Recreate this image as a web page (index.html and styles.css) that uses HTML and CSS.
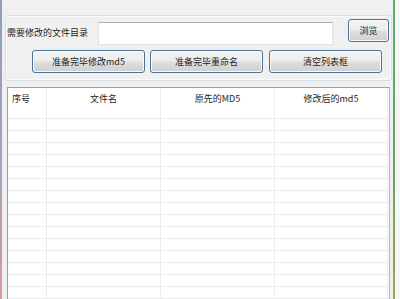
FILE: index.html
```html
<!DOCTYPE html>
<html>
<head>
<meta charset="utf-8">
<link rel="stylesheet" href="styles.css">
</head>
<body>
<div class="frame">
  <div class="edge-left"></div>
  <div class="main">
    <div class="group">
      <div class="row1">
        <span class="label">需要修改的文件目录</span>
        <div class="textbox"></div>
        <button class="btn browse">浏览</button>
      </div>
      <div class="row2">
        <button class="btn wide">准备完毕修改md5</button>
        <button class="btn wide">准备完毕重命名</button>
        <button class="btn wide third">清空列表框</button>
      </div>
    </div>
    <div class="list">
      <div class="lrow head">
        <div class="cell first">序号</div>
        <div class="cell center">文件名</div>
        <div class="cell center">原先的MD5</div>
        <div class="cell center">修改后的md5</div>
        <div class="cell rest"></div>
      </div>
      <div class="lrow item"><div class="cell"></div><div class="cell"></div><div class="cell"></div><div class="cell"></div><div class="cell rest"></div></div>
      <div class="lrow item"><div class="cell"></div><div class="cell"></div><div class="cell"></div><div class="cell"></div><div class="cell rest"></div></div>
      <div class="lrow item"><div class="cell"></div><div class="cell"></div><div class="cell"></div><div class="cell"></div><div class="cell rest"></div></div>
      <div class="lrow item"><div class="cell"></div><div class="cell"></div><div class="cell"></div><div class="cell"></div><div class="cell rest"></div></div>
      <div class="lrow item"><div class="cell"></div><div class="cell"></div><div class="cell"></div><div class="cell"></div><div class="cell rest"></div></div>
      <div class="lrow item"><div class="cell"></div><div class="cell"></div><div class="cell"></div><div class="cell"></div><div class="cell rest"></div></div>
      <div class="lrow item"><div class="cell"></div><div class="cell"></div><div class="cell"></div><div class="cell"></div><div class="cell rest"></div></div>
      <div class="lrow item"><div class="cell"></div><div class="cell"></div><div class="cell"></div><div class="cell"></div><div class="cell rest"></div></div>
      <div class="lrow item"><div class="cell"></div><div class="cell"></div><div class="cell"></div><div class="cell"></div><div class="cell rest"></div></div>
      <div class="lrow item"><div class="cell"></div><div class="cell"></div><div class="cell"></div><div class="cell"></div><div class="cell rest"></div></div>
      <div class="lrow item"><div class="cell"></div><div class="cell"></div><div class="cell"></div><div class="cell"></div><div class="cell rest"></div></div>
      <div class="lrow item"><div class="cell"></div><div class="cell"></div><div class="cell"></div><div class="cell"></div><div class="cell rest"></div></div>
      <div class="lrow item"><div class="cell"></div><div class="cell"></div><div class="cell"></div><div class="cell"></div><div class="cell rest"></div></div>
      <div class="lrow item"><div class="cell"></div><div class="cell"></div><div class="cell"></div><div class="cell"></div><div class="cell rest"></div></div>
      <div class="lrow item"><div class="cell"></div><div class="cell"></div><div class="cell"></div><div class="cell"></div><div class="cell rest"></div></div>
      <div class="lrow item"><div class="cell"></div><div class="cell"></div><div class="cell"></div><div class="cell"></div><div class="cell rest"></div></div>
    </div>
  </div>
  <div class="edge-right"></div>
  <div class="outside"></div>
</div>
</body>
</html>
```

FILE: styles.css
```css
html, body {
  margin: 0;
  padding: 0;
  width: 400px;
  height: 299px;
  overflow: hidden;
  background: #f0f0f0;
  font-family: "Noto Sans CJK SC", "Liberation Sans", sans-serif;
  font-size: 9px;
  color: #1e1e1e;
}

.frame {
  display: flex;
  width: 400px;
  height: 299px;
  overflow: hidden;
}

.edge-left {
  flex: 0 0 2px;
  background: linear-gradient(#8e9cc0, #a4a0c0 50%, #d49a9a);
}

.main {
  flex: 0 0 391px;
  background: #f0f0f0;
  display: flex;
  flex-direction: column;
}

.edge-right {
  flex: 0 0 2px;
  background: linear-gradient(#5cae6c, #6aa462 60%, #a6a050);
}

.outside {
  flex: 1;
  background: #f6f6f6;
}

.group {
  margin: 15px 1px 0 3px;
  width: 387px;
  box-sizing: border-box;
  border: 1px solid #d5dfe5;
  border-radius: 3px;
  box-shadow: inset 0 0 0 1px #fbfbfb;
  padding: 0 0 7px 0;
}

.row1 {
  display: flex;
  align-items: flex-start;
  padding-left: 1px;
}

.label {
  width: 91px;
  margin-top: 11px;
  line-height: 12px;
  white-space: nowrap;
}

.textbox {
  width: 235px;
  height: 23px;
  margin-top: 6px;
  box-sizing: border-box;
  background: #ffffff;
  border: 1px solid #e2e3ea;
  border-top-color: #abadb3;
}

.btn {
  font-family: "Noto Sans CJK SC", "Liberation Sans", sans-serif;
  font-size: 9px;
  color: #1e1e1e;
  height: 23px;
  padding: 0;
  box-sizing: border-box;
  border: 1px solid #4c7393;
  border-radius: 3px;
  background: linear-gradient(#f4f4f4 0%, #ececec 48%, #dedede 52%, #d0d0d0 100%);
  box-shadow: inset 0 0 0 1px #fafafa;
  line-height: 20px;
}

.browse {
  width: 41px;
  margin-left: 15px;
  margin-top: 3px;
}

.row2 {
  display: flex;
  gap: 5px;
  padding-left: 26px;
  margin-top: 5px;
}

.wide {
  width: 113px;
}

.third {
  margin-left: 1px;
}

.list {
  margin: 6px 0 0 5px;
  width: 383px;
  box-sizing: border-box;
  border: 1px solid #9a9ea6;
  border-right-color: #b4b4b4;
  background: #ffffff;
  flex: 1 0 auto;
}

.lrow {
  display: grid;
  grid-template-columns: 39px 114px 114px 113px 1fr;
}

.head {
  height: 19px;
}

.head .cell {
  line-height: 22px;
  border-right-color: #eeeeee;
}

.item {
  height: 12px;
}

.item .cell {
  border-bottom: 1px solid #ececec;
}

.cell {
  box-sizing: border-box;
  border-right: 1px solid #ececec;
  white-space: nowrap;
  overflow: hidden;
}

.cell.rest {
  border-right: none;
}

.first {
  padding-left: 4px;
}

.center {
  text-align: center;
}
```
